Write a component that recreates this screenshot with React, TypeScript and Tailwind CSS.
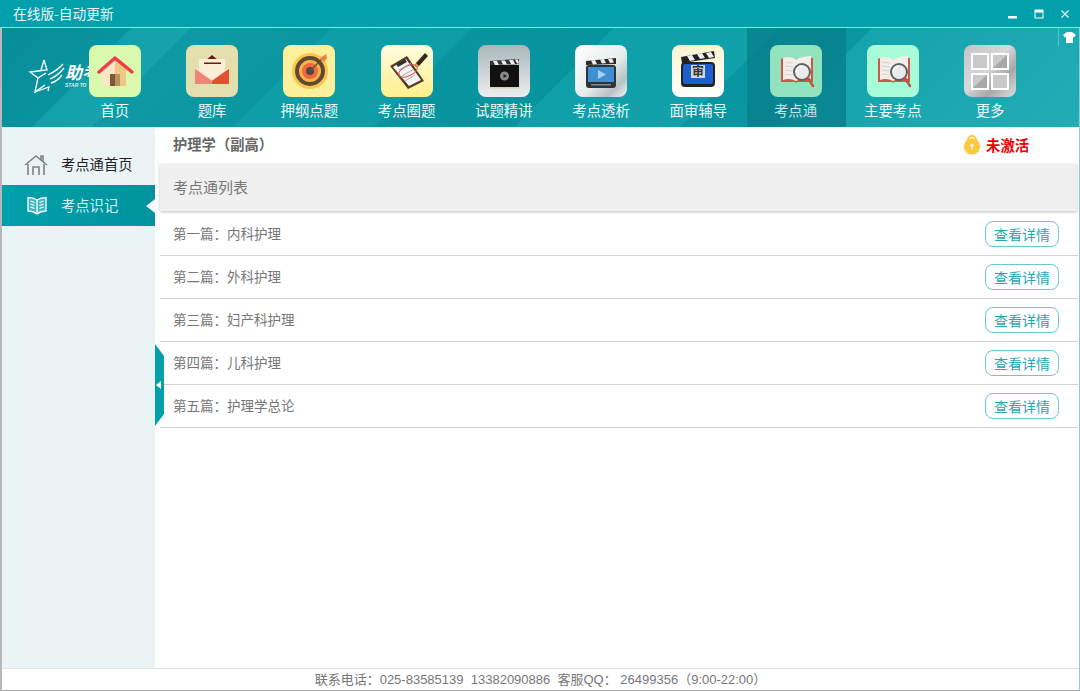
import React from "react";

const font = { fontFamily: '"Noto Sans CJK SC", "Liberation Sans", sans-serif' };
const C = "\uFF1A";

const Tile = ({ bg, children }: { bg: string; children: React.ReactNode }) => (
  <div className={`w-[52px] h-[52px] rounded-[8px] overflow-hidden ${bg}`}>
    <svg viewBox="0 0 52 52" width="52" height="52">{children}</svg>
  </div>
);

const BookLens = () => (
  <>
    <path d="M11 14 L13 13 L26 15 L39 13 L43 13 L43 37 L27 37 L26 38 L25 37 L11 37Z" fill="#d2554a" />
    <path d="M13 13 C18 11 23 12 26 15 C30 12 36 11 41 11 L41 34 C36 33 30 34 26 36 C22 34 18 33 13 35Z" fill="#f1eeea" />
    <path d="M15 17l8 1M15 21l8 1M15 25l7 1M15 29l8 1" stroke="#d8d5cf" strokeWidth="1" />
    <circle cx="32" cy="27" r="8" fill="#e9ebeb" stroke="#606060" strokeWidth="2" />
    <path d="M26 27a6 6 0 0 1 6-6" fill="none" stroke="#fff" strokeWidth="1.5" />
    <path d="M38 33 L43 41" stroke="#c9503f" strokeWidth="2.5" strokeLinecap="round" />
  </>
);

const items: { label: string; tile: React.ReactNode; active?: boolean }[] = [
  {
    label: "首页",
    tile: (
      <Tile bg="bg-[#d9f9ac]">
        <path d="M13 25 L26 14 L37 24 L37 41 L13 41Z" fill="#f0c682" />
        <path d="M13 26 L26 15 L26 41 L13 41Z" fill="#fde6c4" />
        <rect x="21" y="29" width="10" height="12" fill="#7d5a36" />
        <rect x="26" y="29" width="5" height="12" fill="#b89162" />
        <path d="M10 27 L26 13 L43 27" fill="none" stroke="#ee3f48" strokeWidth="3.5" strokeLinecap="round" strokeLinejoin="round" />
      </Tile>
    ),
  },
  {
    label: "题库",
    tile: (
      <Tile bg="bg-[#e4e0ad]">
        <path d="M19 16 L26 10 L33 16Z" fill="#6b1a10" />
        <rect x="13" y="14" width="26" height="20" fill="#fbf0d6" />
        <rect x="18" y="17.5" width="17" height="1.5" fill="#6b1a10" />
        <path d="M26 35 L43 23 L43 39 L26 39Z" fill="#e2502f" />
        <path d="M9 23 L26 35 L26 39 L9 39Z" fill="#ec8677" />
        <path d="M9 23 L26 35 L43 23" fill="none" stroke="#fbe3d8" strokeWidth="1.2" />
      </Tile>
    ),
  },
  {
    label: "押纲点题",
    tile: (
      <Tile bg="bg-[#fdf09a]">
        <circle cx="27" cy="26" r="18" fill="#fcc64a" />
        <circle cx="27" cy="26" r="15" fill="#5f4a33" />
        <circle cx="27" cy="26" r="11" fill="#f8b04a" />
        <circle cx="27" cy="26" r="8" fill="#f0683e" />
        <circle cx="27" cy="26" r="4" fill="#4f4842" />
        <path d="M27 26 L40 13" stroke="#6a4a30" strokeWidth="1.2" />
        <path d="M37 13 L43 9 L44 13 L41 17Z" fill="#f0803c" />
      </Tile>
    ),
  },
  {
    label: "考点圈题",
    tile: (
      <Tile bg="bg-[linear-gradient(180deg,#fffde0,#fff08c)]">
        <path d="M9 21 L26 11 L43 36 L27 44Z" fill="#5a3a22" />
        <path d="M12 22 L25 14 L40 35 L28 41Z" fill="#f5f5f5" />
        <path d="M15 19 L24 14 L26 17 L17 22Z" fill="#333" />
        <ellipse cx="27" cy="26" rx="10" ry="5" transform="rotate(-25 27 26)" fill="none" stroke="#d9534f" strokeWidth="1" />
        <path d="M18 25l12-7M21 31l12-7M24 36l10-6" stroke="#aaa" strokeWidth="1" />
        <path d="M35 18 L44 8 L47 11 L38 21 L34 22Z" fill="#3a2618" />
        <path d="M34 22 L35 18 L38 21Z" fill="#d9a441" />
      </Tile>
    ),
  },
  {
    label: "试题精讲",
    tile: (
      <Tile bg="bg-[linear-gradient(180deg,#a9b6b9,#eceeee)]">
        <path d="M12 16 L41 14 L41 19 L12 20Z" fill="#333" />
        <path d="M15 16 l4 0 l2 4 l-4 0Z M23 15.5 l4 0 l2 4 l-4 0Z M31 15 l4 0 l2 4 l-4 0Z M37 14.5 l3 0 l1 4 l-2 0Z" fill="#eee" />
        <rect x="12" y="20" width="29" height="22" fill="#111" />
        <circle cx="26.5" cy="31" r="4.5" fill="#888" />
        <path d="M25.5 29 L29 31 L25.5 33Z" fill="#222" />
        <rect x="12" y="42" width="29" height="1.5" fill="#d8d2b0" />
      </Tile>
    ),
  },
  {
    label: "考点透析",
    tile: (
      <Tile bg="bg-[linear-gradient(135deg,#fdfdfd,#e9eeee_55%,#b5c2c4_80%,#f5f5f5)]">
        <path d="M11 16 L41 13 L41 19 L11 20Z" fill="#2a2a2a" />
        <path d="M16 15.5 l4 -.5 l2 4 l-4 .5Z M25 14.5 l4 -.5 l2 4 l-4 .5Z M33 14 l4 -.5 l2 4 l-4 .5Z" fill="#eee" />
        <rect x="11" y="20" width="30" height="23" rx="3" fill="#333" />
        <rect x="13" y="22" width="26" height="15" fill="#3f8fd4" />
        <path d="M23 25 L31 29.5 L23 34Z" fill="#a8d0ee" />
        <rect x="16" y="39" width="20" height="1.5" fill="#888" />
      </Tile>
    ),
  },
  {
    label: "面审辅导",
    tile: (
      <Tile bg="bg-[linear-gradient(180deg,#fbf3cf,#ffffff)]">
        <path d="M9 12 L42 6 L43 13 L10 18Z" fill="#222" />
        <path d="M15 11 l5 -1 l3 5 l-5 1Z M25 9 l5 -1 l3 5 l-5 1Z M34 8 l5 -1 l3 5 l-5 1Z" fill="#eee" />
        <rect x="9" y="17" width="34" height="25" rx="4" fill="#222" />
        <rect x="11" y="19" width="30" height="20" rx="2" fill="#1d5fcf" />
        <rect x="19" y="20" width="14" height="13" fill="#cfd8e8" />
        <text x="26" y="31" textAnchor="middle" fontSize="12" fontWeight="700" fill="#333" style={font}>审</text>
      </Tile>
    ),
  },
  { label: "考点通", active: true, tile: <Tile bg="bg-[#92e3bd]"><BookLens /></Tile> },
  { label: "主要考点", tile: <Tile bg="bg-[#a8fdd8]"><BookLens /></Tile> },
  {
    label: "更多",
    tile: (
      <Tile bg="bg-[linear-gradient(135deg,#c4c4c4,#d8d8d8_45%,#a8a8a8_70%,#e0e0e0)]">
        <g fill="#c9c9c9" stroke="#fff" strokeWidth="2">
          <rect x="8" y="9" width="16" height="15" />
          <rect x="28" y="9" width="16" height="15" />
          <rect x="8" y="29" width="16" height="15" />
          <rect x="28" y="29" width="16" height="15" />
        </g>
        <path d="M29 23 L43 10 L43 23Z M9 43 L23 30 L23 43Z" fill="#a8a8a8" />
      </Tile>
    ),
  },
];

const rows = ["第一篇" + C + "内科护理", "第二篇" + C + "外科护理", "第三篇" + C + "妇产科护理", "第四篇" + C + "儿科护理", "第五篇" + C + "护理学总论"];

export default function App() {
  return (
    <div className="w-[1080px] h-[691px] overflow-hidden flex flex-col bg-white" style={font}>
      {/* title bar */}
      <div className="h-[27px] shrink-0 bg-[#01a0ab] flex items-center justify-between pl-[13px] pr-[9px] text-[13.7px] text-[#e6f6f7]">
        <span>在线版-自动更新</span>
        <div className="flex items-center gap-[14px]">
          <svg width="12" height="12" viewBox="0 0 12 12"><rect x="1" y="8" width="9" height="2.5" fill="#fff" /></svg>
          <svg width="12" height="12" viewBox="0 0 12 12"><rect x="2" y="2" width="8" height="8" fill="none" stroke="#fff" strokeWidth="1" /><rect x="2" y="2" width="8" height="2.5" fill="#fff" /></svg>
          <svg width="12" height="12" viewBox="0 0 12 12"><path d="M2.5 2.5 L9.5 9.5 M9.5 2.5 L2.5 9.5" stroke="#d8eef0" strokeWidth="1.4" /></svg>
        </div>
      </div>
      <div className="flex-1 min-h-0 flex flex-col border-t border-[#9ed8dc] border-l-2 border-l-[#b8b8b8] border-r border-r-[#8fcdd2]">
        {/* nav */}
        <div className="relative h-[99px] shrink-0 flex pl-[64.2px] bg-[linear-gradient(135deg,#078c98_0%,#09949f_11%,#12a0a9_11%,#16a3ac_16%,#0d9aa5_16%,#0b97a2_28%,#0e9ea8_28%,#0e9da7_40%,#09959f_40%,#07949f_52%,#0f9fa9_52%,#11a1ab_66%,#0a96a1_66%,#0b97a2_74%,#15a3ac_74%,#22adb5_100%)]">
          <div className="absolute left-[26px] top-[30px] flex items-start">
            <svg width="38" height="38" viewBox="0 0 38 38" fill="none" stroke="#fff" strokeWidth="1.3">
              <path d="M16 2 L19 12 L10 13 L2 14 L10 20 L7 34 L17 27" />
              <path d="M16 2 L13 12 M10 20 L18 15 M7 34 L21 29 L20 33" />
              <path d="M20 17 C24 15 30 12 35 6 M22 21 C27 19 32 15 36 10 M23 25 C27 24 31 21 34 17" />
            </svg>
            <div className="flex flex-col -ml-[1px] mt-[4px]">
              <span className="text-[17px] leading-[20px] font-bold italic text-white">助考</span>
              <span className="text-[5px] leading-[6px] font-bold italic text-[#d8f0f1] whitespace-nowrap" style={{ fontFamily: '"Liberation Sans", sans-serif' }}>STAR TO</span>
            </div>
          </div>
          {items.map((it) => (
            <div
              key={it.label}
              className={`relative w-[97.25px] flex flex-col items-center pt-[17px] ${it.active ? "bg-[#06808b]/80 shadow-[2px_0_0_rgba(6,128,139,0.8)]" : ""}`}
            >
              {it.tile}
              <span className={`mt-[1px] text-[14.4px] leading-[24px] whitespace-nowrap ${it.active ? "text-[#c4e6e8]" : "text-[#eaf8f8]"}`}>{it.label}</span>
            </div>
          ))}
          <div className="absolute right-0 top-0 w-[21px] h-[18px] border-l border-[#5fbcc2] flex items-center justify-center">
            <svg width="13" height="11" viewBox="0 0 13 11"><path d="M4 0 L9 0 L13 3 L11 5.5 L10 5 L10 11 L3 11 L3 5 L2 5.5 L0 3Z" fill="#fff" /></svg>
          </div>
        </div>
        {/* body */}
        <div className="flex-1 min-h-0 flex">
          <aside className="relative w-[153px] shrink-0 bg-[#eaf4f5] pt-[18px]">
            <div className="h-[40px] flex items-center pl-[22px] gap-[13px] text-[14.3px] text-[#1f1f1f]">
              <svg width="24" height="22" viewBox="0 0 24 22" fill="none" stroke="#7b8486" strokeWidth="1.6">
                <path d="M1 11 L12 2 L23 11" />
                <path d="M17 6 L17 2 L19 2 L19 8" />
                <path d="M4 10 L4 21 M20 10 L20 21" />
                <path d="M9 21 L9 13 L15 13 L15 21" />
              </svg>
              <span className="-mt-[2px]">考点通首页</span>
            </div>
            <div className="relative h-[41px] flex items-center pl-[25px] gap-[14px] text-[14.3px] text-[#d8f0f1] bg-[linear-gradient(90deg,#01a0ab,#01939e)]">
              <svg width="20" height="19" viewBox="0 0 20 19" fill="none" stroke="#fff" strokeWidth="1.3">
                <path d="M10 4 C7 2 4 1.5 1 1.5 L1 15 C4 15 7 15.5 10 18 C13 15.5 16 15 19 15 L19 1.5 C16 1.5 13 2 10 4Z" fill="#fff" fillOpacity="0.25" />
                <path d="M10 4 L10 18" />
                <path d="M3.5 5 L7.5 6.5 M3.5 8 L7.5 9.5 M3.5 11 L7.5 12.5 M16.5 5 L12.5 6.5 M16.5 8 L12.5 9.5 M16.5 11 L12.5 12.5" />
              </svg>
              <span className="-mt-[1px]">考点识记</span>
              <div className="absolute right-0 top-[14px] w-0 h-0 border-y-[7px] border-y-transparent border-r-[9px] border-r-[#f6fafa]" />
            </div>
          </aside>
          <main className="relative flex-1 min-w-0 pl-[5px] pr-px">
            <div className="absolute left-0 top-[217px] w-[9px] h-[82px] bg-[#01a0ab] [clip-path:polygon(0_0,100%_12px,100%_70px,0_100%)] flex items-center justify-center">
              <div className="w-0 h-0 -ml-[2px] border-y-[4px] border-y-transparent border-r-[5px] border-r-white" />
            </div>
            <div className="h-[37px] flex items-center justify-between pl-[13px] pr-[49px]">
              <span className="-mt-[3px] text-[14.3px] font-bold text-[#666]">{"护理学\uFF08副高\uFF09"}</span>
              <div className="flex items-center gap-[5px] -mt-[1px]">
                <svg width="18" height="20" viewBox="0 0 18 20">
                  <path d="M5 8 V5 a4 4 0 0 1 8 0 V8" fill="none" stroke="#fbc84a" strokeWidth="2" />
                  <circle cx="9" cy="11.5" r="8.2" fill="#fdc93f" />
                  <circle cx="9" cy="10.5" r="1.5" fill="#fff" />
                  <rect x="8.4" y="11" width="1.2" height="3.8" fill="#fff" />
                </svg>
                <span className="text-[14.3px] font-bold text-[#f00000]">未激活</span>
              </div>
            </div>
            <div className="h-[47px] mb-[2px] mr-px flex items-center pl-[13px] bg-[#f0f0f0] text-[15px] text-[#777] shadow-[0_1px_3px_rgba(0,0,0,0.25)]">考点通列表</div>
            {rows.map((r) => (
              <div key={r} className="h-[43px] flex items-center justify-between pl-[13px] pr-[19px] border-b border-[#d4d4d4] text-[13.5px] text-[#777]">
                <span className="-mt-[2px]">{r}</span>
                <button className="w-[74px] h-[26px] rounded-[8px] border-[1.5px] border-[#6cc8cf] text-[14px] leading-[22px] text-[#2aa6b1] bg-white">查看详情</button>
              </div>
            ))}
          </main>
        </div>
        {/* footer */}
        <div className="h-[23px] shrink-0 border-t border-[#e2e2e2] border-b border-b-[#a8a8a8] flex items-center justify-center text-[13px] text-[#777] bg-white">
          <span className="whitespace-pre" style={{ fontFamily: '"Liberation Sans", "Noto Sans CJK SC", sans-serif' }}>{"联系电话" + C + "025-83585139  13382090886  客服QQ" + C + " 26499356\uFF089:00-22:00\uFF09"}</span>
        </div>
      </div>
    </div>
  );
}
